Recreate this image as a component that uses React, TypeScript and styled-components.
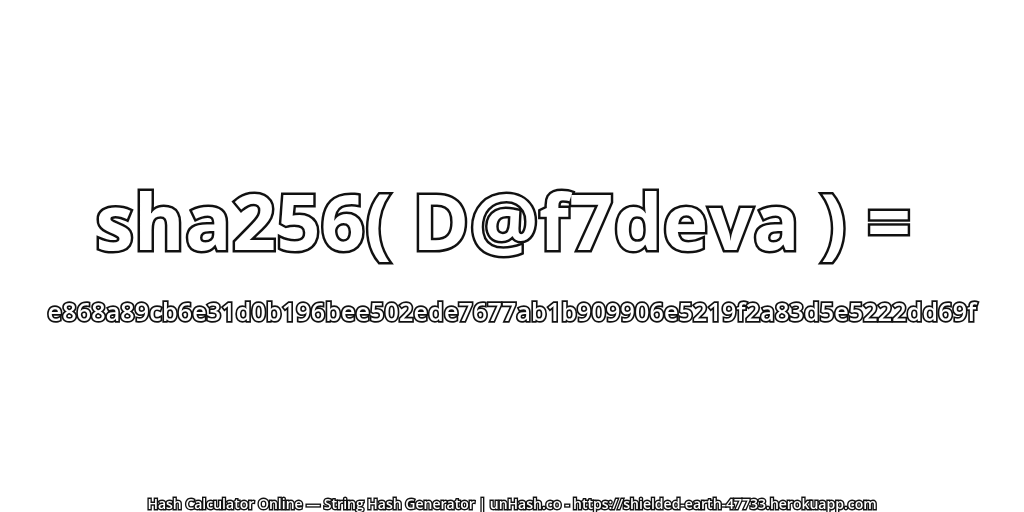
import React from "react";
import styled, { createGlobalStyle } from "styled-components";

const Global = createGlobalStyle`
  html, body { margin: 0; padding: 0; background: #fff; }
  #root { width: 1024px; height: 512px; }
`;

const Page = styled.main`
  width: 1024px;
  height: 512px;
  display: flex;
  flex-direction: column;
  align-items: center;
  font-family: "Open Sans", "Noto Sans", sans-serif;
  color: #fff;
  overflow: hidden;
  will-change: transform;
`;

const Center = styled.div`
  flex: 1;
  display: flex;
  flex-direction: column;
  align-items: center;
  justify-content: center;
`;

const Title = styled.h1`
  margin: 0;
  padding-right: 17px;
  font-size: 77px;
  line-height: 104px;
  font-weight: 700;
  letter-spacing: 0.4px;
  white-space: nowrap;
  -webkit-text-stroke: 5px #111;
  paint-order: stroke fill;
`;

const Hash = styled.div`
  font-size: 25px;
  line-height: 34px;
  margin-top: 21px;
  letter-spacing: 0.19px;
  font-weight: 600;
  white-space: nowrap;
  -webkit-text-stroke: 3.4px #111;
  paint-order: stroke fill;
`;

const Footer = styled.footer`
  font-size: 14px;
  line-height: 16px;
  font-weight: 600;
  white-space: nowrap;
  -webkit-text-stroke: 2.8px #111;
  paint-order: stroke fill;
`;

export default function App() {
  return (
    <Page>
      <Global />
      <Center>
        <Title>sha256( D@f7deva ) =</Title>
        <Hash>e868a89cb6e31d0b196bee502ede7677ab1b909906e5219f2a83d5e5222dd69f</Hash>
      </Center>
      <Footer>Hash Calculator Online — String Hash Generator | unHash.co - https://shielded-earth-47733.herokuapp.com</Footer>
    </Page>
  );
}
